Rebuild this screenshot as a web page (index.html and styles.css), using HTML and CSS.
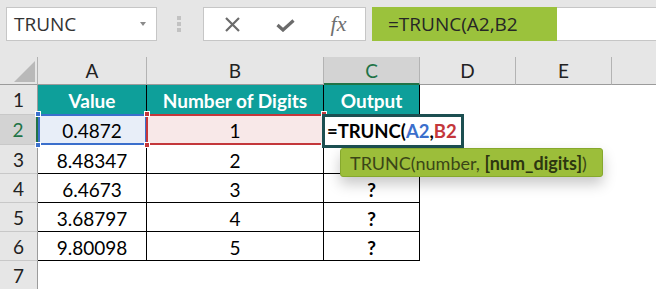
FILE: index.html
```html
<!DOCTYPE html>
<html lang="en">
<head>
    <meta charset="UTF-8">
    <title>TRUNC - Worksheet</title>
    <link rel="stylesheet" href="styles.css">
</head>
<body>
    <div class="topbar">
        <div class="namebox">
            <span>TRUNC</span>
            <span class="caret"></span>
        </div>
        <div class="grip"><i></i><i></i><i></i></div>
        <div class="tools">
            <div class="tool">
                <svg width="15" height="15" viewBox="0 0 15 15"><path d="M1 1L14 14M14 1L1 14" stroke="#6b6b6b" stroke-width="2.2" fill="none"/></svg>
            </div>
            <div class="tool check">
                <svg width="19" height="13" viewBox="0 0 19 13"><path d="M1.5 6L7 11L17.5 1.5" stroke="#6b6b6b" stroke-width="3.2" fill="none"/></svg>
            </div>
            <div class="tool"><span class="fx">fx</span></div>
        </div>
        <div class="formula">
            <span class="formula-text">=TRUNC(A2,B2</span>
        </div>
    </div>

    <div class="sheet">
        <!-- column headers -->
        <div class="corner">
            <svg width="21" height="21" viewBox="0 0 21 21"><polygon points="21,0 21,21 0,21" fill="#b9b9b9"/></svg>
        </div>
        <div class="col-head">A</div>
        <div class="col-head">B</div>
        <div class="col-head active">C</div>
        <div class="col-head">D</div>
        <div class="col-head">E</div>
        <div class="col-head last"></div>

        <!-- row 1 -->
        <div class="row-head">1</div>
        <div class="cell head">Value</div>
        <div class="cell head">Number of Digits</div>
        <div class="cell head">Output</div>
        <div class="blank"></div><div class="blank"></div><div class="blank"></div>

        <!-- row 2 -->
        <div class="row-head active">2</div>
        <div class="cell ref-a">
            0.4872
            <span class="handle blue tl"></span>
            <span class="handle blue bl"></span>
        </div>
        <div class="cell ref-b">
            1
            <span class="handle red tl"></span>
            <span class="handle red tr"></span>
            <span class="handle red bl"></span>
            <span class="handle red br"></span>
        </div>
        <div class="cell editing">
            <div class="edit"><span>=TRUNC(<span class="ref-blue">A2</span>,<span class="ref-red">B2</span></span></div>
        </div>
        <div class="blank"></div><div class="blank"></div><div class="blank"></div>

        <!-- row 3 (output hidden under the hint) -->
        <div class="row-head">3</div>
        <div class="cell">8.48347</div>
        <div class="cell">2</div>
        <div class="cell q">
            <div class="tooltip"><span>TRUNC(number, <b>[num_digits]</b>)</span></div>
        </div>
        <div class="blank"></div><div class="blank"></div><div class="blank"></div>

        <!-- row 4 -->
        <div class="row-head">4</div>
        <div class="cell">6.4673</div>
        <div class="cell">3</div>
        <div class="cell q">?</div>
        <div class="blank"></div><div class="blank"></div><div class="blank"></div>

        <!-- row 5 -->
        <div class="row-head">5</div>
        <div class="cell">3.68797</div>
        <div class="cell">4</div>
        <div class="cell q">?</div>
        <div class="blank"></div><div class="blank"></div><div class="blank"></div>

        <!-- row 6 -->
        <div class="row-head">6</div>
        <div class="cell">9.80098</div>
        <div class="cell">5</div>
        <div class="cell q">?</div>
        <div class="blank"></div><div class="blank"></div><div class="blank"></div>

        <!-- row 7 -->
        <div class="row-head">7</div>
        <div class="blank"></div><div class="blank"></div><div class="blank"></div>
        <div class="blank"></div><div class="blank"></div><div class="blank"></div>
    </div>
</body>
</html>
```

FILE: styles.css
```css
:root {
    --ribbon-bg: #e6e6e6;
    --header-line: #9b9b9b;
    --sep-line: #b3b3b3;
    --teal: #0e9f9a;
    --excel-green: #217346;
    --ref-blue: #3b6fcc;
    --ref-red: #c4373b;
    --lime: #9bc23c;
}

* {
    margin: 0;
    padding: 0;
    box-sizing: border-box;
}

body {
    width: 656px;
    height: 289px;
    overflow: hidden;
    background-color: #fff;
    font-family: Lato, 'Open Sans', sans-serif;
}

/* formula bar */
.topbar {
    height: 57px;
    background-color: var(--ribbon-bg);
    display: flex;
    align-items: flex-start;
    padding-top: 7px;
}

.namebox {
    margin-left: 6px;
    width: 151px;
    height: 34px;
    background-color: #fff;
    border: 1px solid #c6c6c6;
    display: flex;
    align-items: center;
    justify-content: space-between;
    padding: 0 10px 0 7px;
    font-family: 'Open Sans', sans-serif;
    font-size: 19px;
    color: #333;
}

.caret {
    width: 0;
    height: 0;
    border-left: 3.5px solid transparent;
    border-right: 3.5px solid transparent;
    border-top: 4px solid #8a8a8a;
}

.grip {
    margin-left: 20px;
    margin-top: 9px;
    display: flex;
    flex-direction: column;
    gap: 2px;
}

.grip i {
    display: block;
    width: 4px;
    height: 4px;
    background-color: #c2c2c2;
}

.tools {
    margin-left: 22px;
    width: 163px;
    height: 34px;
    background-color: #fff;
    border: 1px solid #c6c6c6;
    display: flex;
    align-items: center;
    padding-left: 2px;
}

.tool {
    width: 54px;
    display: flex;
    justify-content: center;
    align-items: center;
}

.tool.check {
    margin-top: 3px;
}

.fx {
    font-family: 'Liberation Serif', serif;
    font-style: italic;
    font-size: 22px;
    color: #6f6f6f;
}

.formula {
    margin-left: 6px;
    flex: 1;
    height: 34px;
    background-color: #fff;
    border-top: 1px solid #c6c6c6;
    border-bottom: 1px solid #c6c6c6;
    display: flex;
}

.formula-text {
    width: 185px;
    margin: -1px 0;
    background-color: var(--lime);
    padding-left: 16px;
    font-family: 'Open Sans', sans-serif;
    font-size: 19px;
    color: #262626;
    display: flex;
    align-items: center;
}

/* grid */
.sheet {
    display: grid;
    grid-template-columns: 38px 109px 177px 96px 96px 96px 1fr;
    grid-template-rows: 28px 30px 30px repeat(5, 29px);
    font-size: 19px;
    color: #000;
}

.corner {
    background-color: var(--ribbon-bg);
    border-right: 1px solid var(--sep-line);
    border-bottom: 1px solid var(--header-line);
    display: flex;
    justify-content: flex-end;
    align-items: flex-end;
    padding: 0 2px 2px 0;
}

.col-head {
    background-color: var(--ribbon-bg);
    border-right: 1px solid var(--sep-line);
    border-bottom: 1px solid var(--header-line);
    display: flex;
    justify-content: center;
    align-items: center;
    color: #222;
}

.col-head.last {
    border-right: none;
}

.col-head.active {
    background-color: #d3d3d3;
    color: var(--excel-green);
    border-bottom: 2px solid var(--excel-green);
}

.row-head {
    background-color: var(--ribbon-bg);
    border-right: 1px solid var(--header-line);
    border-bottom: 1px solid #c8c8c8;
    display: flex;
    justify-content: center;
    align-items: center;
    color: #222;
}

.row-head.active {
    background-color: #d3d3d3;
    color: var(--excel-green);
    border-right: 2px solid var(--excel-green);
}

.cell {
    position: relative;
    border-right: 1px solid #000;
    border-bottom: 1px solid #000;
    display: flex;
    justify-content: center;
    align-items: center;
    padding-top: 2px;
}

.cell.head {
    background-color: var(--teal);
    color: #fff;
    font-weight: 700;
}

.cell.q {
    font-weight: 700;
}

/* formula references */
.ref-a {
    background-color: #e8eef8;
}

.ref-a::before {
    content: "";
    position: absolute;
    top: -1px;
    bottom: -1px;
    left: 0;
    right: -1px;
    border: 2px solid var(--ref-blue);
}

.ref-b {
    background-color: #f8e8e8;
}

.ref-b::before {
    content: "";
    position: absolute;
    top: -1px;
    bottom: -1px;
    left: -1px;
    right: -1px;
    border: 2px solid var(--ref-red);
}

.handle {
    position: absolute;
    width: 6px;
    height: 6px;
    border: 1px solid #fff;
    z-index: 1;
}

.handle.blue { background-color: var(--ref-blue); }
.handle.red { background-color: var(--ref-red); }

.handle.tl { top: -4px; left: -3px; }
.handle.tr { top: -4px; right: -4px; }
.handle.bl { bottom: -4px; left: -3px; }
.handle.br { bottom: -4px; right: -4px; }

.edit {
    position: absolute;
    top: -1px;
    left: -2px;
    width: 142px;
    height: 34px;
    background-color: #fff;
    border: 3px solid #1c4f51;
    z-index: 2;
    display: flex;
    align-items: center;
    padding-left: 2px;
    font-size: 18.5px;
    font-weight: 700;
    color: #000;
    white-space: nowrap;
}

.ref-blue { color: var(--ref-blue); }
.ref-red { color: var(--ref-red); }

.tooltip {
    position: absolute;
    top: 3px;
    left: 16px;
    width: 263px;
    height: 29px;
    background-color: #9cbe3a;
    border: 1px solid #86a82d;
    border-radius: 3px;
    box-shadow: 0 7px 14px rgba(0, 0, 0, 0.22);
    z-index: 3;
    display: flex;
    align-items: center;
    padding-left: 9px;
    font-size: 18px;
    font-weight: 400;
    color: #3a4617;
    white-space: nowrap;
}

.tooltip b {
    font-weight: 700;
    color: #2c3610;
}
```
